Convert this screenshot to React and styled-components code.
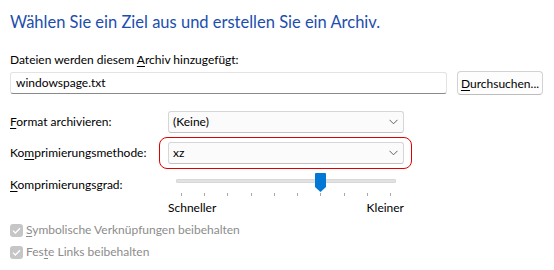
import React from "react";
import styled, { createGlobalStyle } from "styled-components";

const Global = createGlobalStyle`
  html, body { margin: 0; padding: 0; background: #ffffff; }
  body { font-family: Lato, "Noto Sans", sans-serif; font-size: 12px; color: #000; }
`;

const Page = styled.div`
  width: 554px;
  height: 270px;
  box-sizing: border-box;
  padding: 12px 11px 0 10px;
  display: flex;
  flex-direction: column;
`;

const Title = styled.div`
  font-size: 16.5px;
  line-height: 20px;
  color: #1c4eae;
  white-space: nowrap;
`;

const Label = styled.div`
  line-height: 16px;
  white-space: nowrap;
  margin-top: ${(p) => p.$mt || 0}px;
`;

const U = styled.span`
  text-decoration: underline;
  text-underline-offset: 2px;
  text-decoration-thickness: 1px;
`;

const InputRow = styled.div`
  display: flex;
  align-items: center;
  gap: 10px;
  margin-top: 3px;
  height: 24px;
`;

const TextInput = styled.div`
  flex: 1;
  height: 22px;
  box-sizing: border-box;
  border: 1px solid #e3e3e3;
  border-bottom-color: #8a8a8a;
  border-radius: 3px;
  background: #fff;
  padding: 0 5px;
  display: flex;
  align-items: center;
  line-height: 16px;
`;

const Button = styled.div`
  width: 86px;
  height: 24px;
  box-sizing: border-box;
  border: 1px solid #d2d2d2;
  border-bottom-color: #bdbdbd;
  border-radius: 4px;
  background: #fdfdfd;
  display: flex;
  align-items: center;
  justify-content: center;
  white-space: nowrap;
`;

const FormRow = styled.div`
  display: grid;
  grid-template-columns: 158px 236px;
  align-items: center;
  margin-top: ${(p) => p.$mt || 0}px;
  height: ${(p) => p.$h || 22}px;
`;

const SelectWrap = styled.div`
  position: relative;
  &::after {
    content: ${(p) => (p.$highlight ? '""' : "none")};
    position: absolute;
    left: -9px;
    right: -8px;
    top: -5px;
    bottom: -5px;
    border: 1px solid #e00000;
    border-radius: 8px;
    pointer-events: none;
  }
`;

const Select = styled.div`
  height: 22px;
  box-sizing: border-box;
  border: 1px solid #d6d6d6;
  border-bottom-color: #c2c2c2;
  border-radius: 3px;
  background: #fbfbfb;
  display: flex;
  align-items: center;
  justify-content: space-between;
  padding: 0 4px 0 4px;
  line-height: 16px;
`;

const Chevron = () => (
  <svg width="9" height="6" viewBox="0 0 9 6" style={{ marginRight: 1 }}>
    <path d="M0.5 0.8 L4.5 4.8 L8.5 0.8" fill="none" stroke="#5f5f5f" strokeWidth="1" />
  </svg>
);

const Slider = styled.div`
  position: relative;
  height: 26px;
`;

const Track = styled.div`
  position: absolute;
  left: 8px;
  right: 8px;
  top: 7px;
  height: 4px;
  background: #e2e2e2;
  border: 1px solid #d8d8d8;
  box-sizing: border-box;
  border-radius: 1px;
`;

const Ticks = styled.div`
  position: absolute;
  left: 13px;
  width: 210px;
  top: 21px;
  height: 3px;
  display: flex;
  justify-content: space-between;
`;

const Tick = styled.div`
  width: 1px;
  height: 3px;
  background: #a8a8a8;
`;

const Thumb = styled.svg`
  position: absolute;
  top: 1px;
`;

const SliderLabels = styled.div`
  margin-left: 158px;
  width: 236px;
  display: flex;
  justify-content: space-between;
  line-height: 16px;
  margin-top: 2px;
`;

const CheckRow = styled.div`
  display: flex;
  align-items: center;
  gap: 3px;
  line-height: 16px;
  color: #8c8c8c;
  margin-top: ${(p) => p.$mt}px;
`;

const Box = styled.div`
  width: 13px;
  height: 13px;
  border-radius: 3px;
  background: #c6c6c6;
  display: flex;
  align-items: center;
  justify-content: center;
`;

const CheckBox = () => (
  <Box>
    <svg width="9" height="7" viewBox="0 0 9 7">
      <path d="M1 3.6 L3.4 6 L8 1.2" fill="none" stroke="#ffffff" strokeWidth="1.3" />
    </svg>
  </Box>
);

export default function App() {
  const ticks = Array.from({ length: 10 });
  const value = 6;
  const thumbLeft = 13 + (value * 209) / 9 - 5;
  return (
    <>
      <Global />
      <Page>
        <Title>Wählen Sie ein Ziel aus und erstellen Sie ein Archiv.</Title>
        <Label $mt={20}>
          Dateien werden diesem <U>A</U>rchiv hinzugefügt:
        </Label>
        <InputRow>
          <TextInput>windowspage.txt</TextInput>
          <Button>
            <span>
              <U>D</U>urchsuchen...
            </span>
          </Button>
        </InputRow>
        <FormRow $mt={16}>
          <Label>
            <U>F</U>ormat archivieren:
          </Label>
          <SelectWrap>
            <Select>
              <span>(Keine)</span>
              <Chevron />
            </Select>
          </SelectWrap>
        </FormRow>
        <FormRow $mt={9}>
          <Label>
            Ko<U>m</U>primierungsmethode:
          </Label>
          <SelectWrap $highlight>
            <Select>
              <span>xz</span>
              <Chevron />
            </Select>
          </SelectWrap>
        </FormRow>
        <FormRow $mt={8} $h={26}>
          <Label>
            <U>K</U>omprimierungsgrad:
          </Label>
          <Slider>
            <Track />
            <Ticks>
              {ticks.map((_, i) => (
                <Tick key={i} />
              ))}
            </Ticks>
            <Thumb width="11" height="19" viewBox="0 0 11 19" style={{ left: thumbLeft }}>
              <path d="M1 0 H10 Q11 0 11 1 V14 L5.5 19 L0 14 V1 Q0 0 1 0 Z" fill="#0078d4" />
            </Thumb>
          </Slider>
        </FormRow>
        <SliderLabels>
          <span>Schneller</span>
          <span>Kleiner</span>
        </SliderLabels>
        <CheckRow $mt={6}>
          <CheckBox />
          <span>
            <U>S</U>ymbolische Verknüpfungen beibehalten
          </span>
        </CheckRow>
        <CheckRow $mt={6}>
          <CheckBox />
          <span>
            Fes<U>t</U>e Links beibehalten
          </span>
        </CheckRow>
      </Page>
    </>
  );
}
